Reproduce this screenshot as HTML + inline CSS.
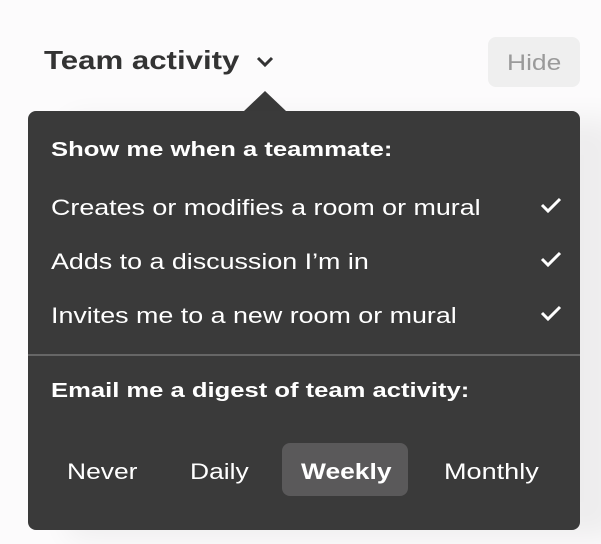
<!DOCTYPE html>
<html><head><style>
body{margin:0;width:601px;height:544px;background:#fcfbfc;font-family:"Liberation Sans",sans-serif;position:relative;overflow:hidden}
.t{position:absolute;white-space:nowrap;transform-origin:0 50%}
.s20{transform:scaleX(1.2)}
.s28{transform:scaleX(1.28)}
.panel{position:absolute;left:28px;top:111px;width:552px;height:419px;background:#3a3a3a;border-radius:8px;box-shadow:40px 8px 30px rgba(0,0,0,0.06)}
.arrow{position:absolute;left:244px;top:91px;width:0;height:0;border-left:21px solid transparent;border-right:21px solid transparent;border-bottom:20px solid #3a3a3a}
.item{color:#fff;font-size:22px;left:51px;transform:scaleX(1.22)}
.chk{position:absolute;left:540px}
</style></head><body>
<div class="t s20" style="left:44px;top:45px;font-size:26px;font-weight:bold;color:#333">Team activity</div>
<svg class="t" style="left:256px;top:56px" width="18" height="12"><path d="M2 2 L9 9 L16 2" stroke="#333" stroke-width="3" fill="none"/></svg>
<div class="t" style="left:488px;top:37px;width:92px;height:50px;background:#efefef;border-radius:8px"></div>
<div class="t s20" style="left:507px;top:50px;color:#9a9a9a;font-size:22px;">Hide</div>
<div class="arrow"></div>
<div class="panel"></div>
<div class="t s28" style="left:51px;top:139px;font-size:20px;font-weight:bold;color:#fff">Show me when a teammate:</div>
<div class="t item" style="top:195px">Creates or modifies a room or mural</div>
<div class="t item" style="top:249px">Adds to a discussion I’m in</div>
<div class="t item" style="top:303px">Invites me to a new room or mural</div>
<svg class="chk" style="top:196px" width="22" height="18"><path d="M2 9 L8 15 L20 3" stroke="#fff" stroke-width="3" fill="none"/></svg>
<svg class="chk" style="top:250px" width="22" height="18"><path d="M2 9 L8 15 L20 3" stroke="#fff" stroke-width="3" fill="none"/></svg>
<svg class="chk" style="top:304px" width="22" height="18"><path d="M2 9 L8 15 L20 3" stroke="#fff" stroke-width="3" fill="none"/></svg>
<div class="t" style="left:28px;top:354px;width:552px;height:2px;background:#666"></div>
<div class="t s28" style="left:51px;top:380px;font-size:20px;font-weight:bold;color:#fff">Email me a digest of team activity:</div>
<div class="t" style="left:282px;top:443px;width:126px;height:53px;background:#5a595a;border-radius:8px"></div>
<div class="t s20" style="left:67px;top:459px;font-size:22px;color:#fff">Never</div>
<div class="t s20" style="left:190px;top:459px;font-size:22px;color:#fff">Daily</div>
<div class="t s20" style="left:301px;top:459px;font-size:22px;color:#fff;font-weight:bold">Weekly</div>
<div class="t" style="left:444px;top:459px;font-size:22px;color:#fff;transform:scaleX(1.23)">Monthly</div>
</body></html>
